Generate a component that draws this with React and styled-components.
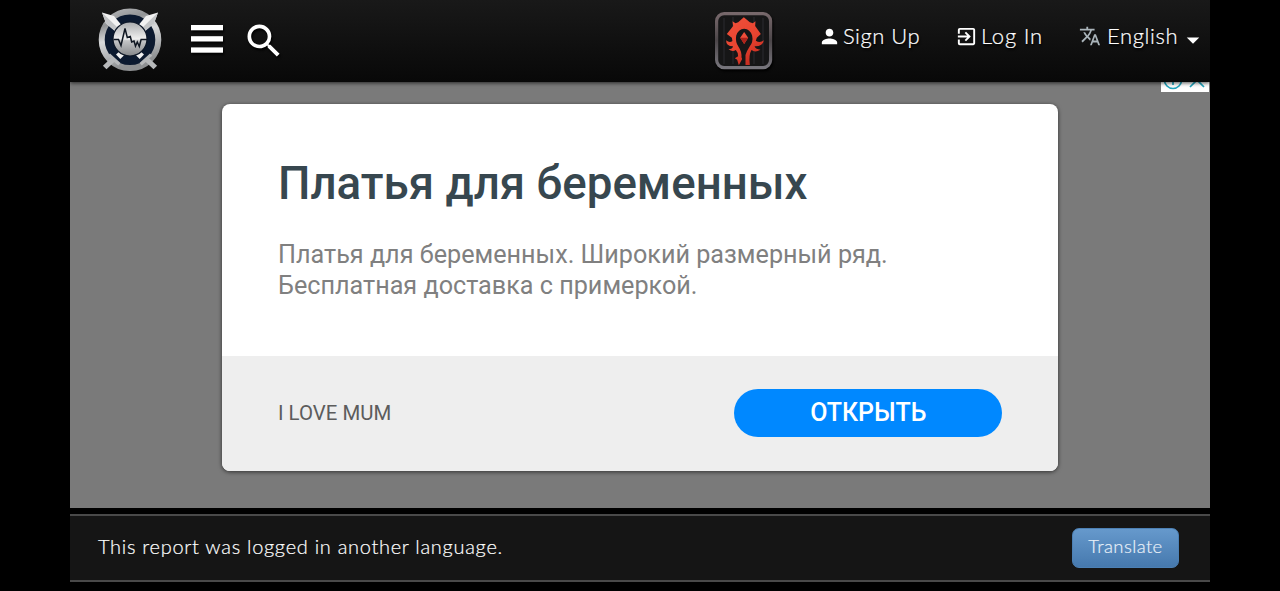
import styled, { createGlobalStyle } from 'styled-components';
import { MdArrowDropDown, MdExitToApp, MdPerson, MdSearch, MdTranslate } from 'react-icons/md';

const GlobalStyle = createGlobalStyle`
	* {
		box-sizing: border-box;
	}

	body {
		margin: 0;
		background-color: #000;
	}
`;

const Page = styled.div`
	width: 1140.5px;
	height: 591px;
	margin-left: 69.5px;
	overflow: hidden;
	font-family: Lato, 'Liberation Sans', sans-serif;
	font-weight: 300;
	color: #fff;
`;

const LogoIcon = () => (
	<svg width="64" height="64" viewBox="0 0 64 64">
		<defs>
			<linearGradient id="ring" x1="0" y1="0" x2="0.3" y2="1">
				<stop offset="0" stopColor="#b5b6b8" />
				<stop offset="0.25" stopColor="#929496" />
				<stop offset="0.5" stopColor="#d8d9da" />
				<stop offset="0.75" stopColor="#b4b6b8" />
				<stop offset="1" stopColor="#8e9092" />
			</linearGradient>
			<linearGradient id="disc" x1="0" y1="0" x2="0" y2="1">
				<stop offset="0" stopColor="#a9abad" />
				<stop offset="0.5" stopColor="#f0f0f0" />
				<stop offset="0.55" stopColor="#c4c5c7" />
				<stop offset="1" stopColor="#85878a" />
			</linearGradient>
		</defs>
		<circle cx="32" cy="31.8" r="28.3" fill="#0c1a30" stroke="url(#ring)" strokeWidth="6" />
		<g id="sword">
			<path d="M4 4.500l12 3.500 9 11-5.600 6L8 15.600z" fill="#f2f2f2" />
			<path d="M4 4.500l18.300 17.800-2.900 3L8 15.600z" fill="#c3c5c7" />
			<path d="M18 46.500l4.800-4.300 4.300 4-4.800 4.800z" fill="#f1f1f1" />
			<path d="M12 45.500l10.500 9.500-2.300 2.500-4-3.500-7.700 7.300-3.600-3.600 8-7.500-3.200-2.400z" fill="#b7b9bb" />
		</g>
		<use href="#sword" transform="matrix(-1 0 0 1 64 0)" />
		<circle cx="32" cy="31" r="17" fill="url(#disc)" stroke="#0c1626" strokeWidth="1.200" />
		<path
			d="M15.500 31.500h5l2.500 6L27 20.500l2.300 9 3-1 1.400 5.500 2.300-1 1.500 5 1.800-4 2 4.500 1.800-7h6"
			fill="none"
			stroke="#101722"
			strokeWidth="1.500"
		/>
	</svg>
);

const MenuIcon = () => (
	<svg width="33" height="28" viewBox="0 0 33 28" fill="#fff">
		<rect y="0" width="32" height="5.300" />
		<rect y="11.200" width="32" height="5.300" />
		<rect y="22.400" width="32" height="5.300" />
	</svg>
);

const HordeIcon = () => (
	<svg width="58" height="58" viewBox="0 0 58 58">
		<defs>
			<linearGradient id="frame" x1="0" y1="0" x2="0" y2="1">
				<stop offset="0" stopColor="#77686b" />
				<stop offset="0.5" stopColor="#4c4649" />
				<stop offset="1" stopColor="#77757c" />
			</linearGradient>
			<linearGradient id="horde" x1="0" y1="0" x2="0.6" y2="1">
				<stop offset="0" stopColor="#f0513b" />
				<stop offset="0.6" stopColor="#e84430" />
				<stop offset="1" stopColor="#c52c20" />
			</linearGradient>
		</defs>
		<rect x="1.600" y="1.600" width="54" height="54" rx="7.500" fill="#161617" stroke="url(#frame)" strokeWidth="3.200" />
		<path d="M9 6v46M18 5v47M39 5v47M48 6v46" stroke="#202023" strokeWidth="2" />
		<g transform="translate(-2.500 -3) scale(0.3333)">
			<path
				d="M94 25L112 40L121 43L129 37L128 51L145 75L133 86L130 95Q142 103 154 94Q151 113 126 112Q130 122 144 122Q128 132 117 123Q108 138 112 168H99V138Q103 125 111 113Q123 99 119 80Q113 60 95 59Q77 60 71 80Q68 99 78 113Q88 127 87 145L89 150L79 169L74 152L67 148L77 142Q78 132 70 123Q60 130 48 121Q60 121 62 112Q40 112 41 94Q51 103 60 96L58 86L43 75L62 51L60 37L69 43L77 40z"
				fill="url(#horde)"
			/>
			<path d="M95 69l12 17-12 19-12-19z" fill="#f04e3a" />
			<path d="M83 86h24l-12 19z" fill="#ad221b" />
		</g>
	</svg>
);

const Header = styled.header`
	position: relative;
	display: flex;
	align-items: flex-start;
	justify-content: space-between;
	height: 82px;
	padding: 8px 1px 0 28px;
	background: linear-gradient(#191919, #080808);
	box-shadow: 0 1px 4px rgba(0, 0, 0, 0.7);
	z-index: 1;
`;

const HeaderGroup = styled.div`
	display: flex;
	align-items: flex-start;
`;

const IconButton = styled.button`
	display: flex;
	margin: ${({ $margin }) => $margin};
	padding: 0;
	border: none;
	background: none;
	color: #fff;
	filter: drop-shadow(1px 2px 1px #000);
`;

const NavLink = styled.a`
	display: flex;
	align-items: center;
	width: ${({ $width }) => $width};
	height: 30px;
	margin-top: 13px;
	font-size: 22px;
	letter-spacing: ${({ $spacing }) => $spacing};
	line-height: 30px;
	white-space: nowrap;
	text-shadow: 1px 2px 2px #000;
	-webkit-text-stroke: 0.2px #fff;

	& > svg {
		flex-shrink: 0;
	}

	& > span {
		margin-left: ${({ $gap }) => $gap || '1.5px'};
	}

	& > span + svg {
		margin: 7px 0 0;
	}
`;

const AdArea = styled.main`
	position: relative;
	display: flex;
	justify-content: center;
	align-items: flex-start;
	height: 426px;
	padding-top: 22px;
	background-color: #7a7a7a;
`;

const AdChoices = styled.div`
	position: absolute;
	top: 0;
	right: 1px;
	width: 48px;
	height: 10px;
	overflow: hidden;
	background-color: #fff;

	& > svg {
		display: block;
	}
`;

const Card = styled.section`
	display: flex;
	flex-direction: column;
	width: 835.5px;
	height: 366.5px;
	overflow: hidden;
	border-radius: 8px;
	background-color: #fff;
	box-shadow: 0 1px 4px rgba(0, 0, 0, 0.6);
	font-family: Roboto, sans-serif;
	font-weight: 400;
`;

const CardBody = styled.div`
	height: 251.5px;
	padding: 53px 56px 0;
`;

const Title = styled.h1`
	margin: 0;
	font-size: 45.7px;
	font-weight: 500;
	line-height: 54px;
	color: #37474f;
	white-space: nowrap;
`;

const Description = styled.p`
	margin: 28px 0 0;
	font-size: 25.2px;
	line-height: 31.3px;
	color: #808080;
	white-space: nowrap;
`;

const CardFooter = styled.div`
	display: flex;
	flex: 1;
	align-items: center;
	justify-content: space-between;
	padding: 0 55.2px 0 56px;
	background-color: #eee;
`;

const Advertiser = styled.div`
	font-size: 20.4px;
	color: #5c5c5c;
`;

const OpenButton = styled.button`
	width: 268px;
	height: 48px;
	padding: 0 0 2px;
	border: none;
	border-radius: 24px;
	background-color: #0088ff;
	font-family: Roboto, sans-serif;
	font-size: 25px;
	font-weight: 500;
	color: #fff;
`;

const LanguageBar = styled.footer`
	display: flex;
	align-items: center;
	justify-content: space-between;
	height: 68px;
	margin-top: 6px;
	padding: 0 31px 0 28.5px;
	border: solid #494949;
	border-width: 2px 0;
	background-color: #151515;
`;

const Message = styled.div`
	padding-bottom: 5px;
	font-size: 20px;
	letter-spacing: 0.71px;
	-webkit-text-stroke: 0.2px #fff;
`;

const TranslateButton = styled.button`
	width: 107px;
	height: 40px;
	padding: 0 0 4px;
	border: 1px solid #4c80b4;
	border-radius: 7px;
	background: linear-gradient(#6699cc, #4679ae);
	font-family: Lato, sans-serif;
	font-size: 18.5px;
	font-weight: 300;
	letter-spacing: 0.4px;
	color: #e8f0f8;
	-webkit-text-stroke: 0.2px #e8f0f8;
`;

export default function App() {
	return (
		<>
			<GlobalStyle />
			<Page>
				<Header>
					<HeaderGroup>
						<LogoIcon />
						<IconButton $margin="17px 0 0 29px">
							<MenuIcon />
						</IconButton>
						<IconButton $margin="11px 0 0 18px">
							<MdSearch size={44} />
						</IconButton>
					</HeaderGroup>
					<HeaderGroup>
						<IconButton $margin="4px 45.500px 0 0">
							<HordeIcon />
						</IconButton>
						<NavLink $width="137px" $spacing="0.5px" $gap="2px">
							<MdPerson size={23} />
							<span>Sign Up</span>
						</NavLink>
						<NavLink $width="124px" $spacing="0.8px" $gap="3px">
							<MdExitToApp size={23} />
							<span>Log In</span>
						</NavLink>
						<NavLink $width="130px" $spacing="0.6px" $gap="6px">
							<MdTranslate size={22} color="#abb5bb" />
							<span>English</span>
							<MdArrowDropDown size={30} />
						</NavLink>
					</HeaderGroup>
				</Header>
				<AdArea>
					<Card>
						<CardBody>
							<Title>Платья для беременных</Title>
							<Description>
								Платья для беременных. Широкий размерный ряд.
								<br />
								Бесплатная доставка с примеркой.
							</Description>
						</CardBody>
						<CardFooter>
							<Advertiser>I LOVE MUM</Advertiser>
							<OpenButton>ОТКРЫТЬ</OpenButton>
						</CardFooter>
					</Card>
					<AdChoices>
						<svg width="48" height="10" viewBox="0 0 48 10" fill="none" stroke="#21a5bd" strokeWidth="1.700">
							<circle cx="12" cy="-2" r="8.500" />
							<path d="M12-5v8M29 5l7-7 7 7" />
						</svg>
					</AdChoices>
				</AdArea>
				<LanguageBar>
					<Message>This report was logged in another language.</Message>
					<TranslateButton>Translate</TranslateButton>
				</LanguageBar>
			</Page>
		</>
	);
}
